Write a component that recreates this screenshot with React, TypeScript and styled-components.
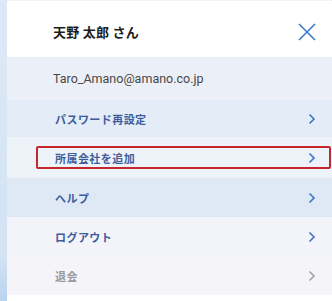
import styled, { createGlobalStyle } from "styled-components";

const GlobalStyle = createGlobalStyle`
  html, body {
    margin: 0;
    padding: 0;
    background: #ffffff;
  }
  body {
    font-family: "Noto Sans CJK JP", "Noto Sans", sans-serif;
  }
`;

const Page = styled.div`
  width: 332px;
  height: 301px;
  display: flex;
  overflow: hidden;
  background: #ffffff;
`;

const SideStrip = styled.div`
  width: 7px;
  flex-shrink: 0;
  background: linear-gradient(180deg, #dde9f6 0%, #d3e3f4 85%, #b9d3ee 100%);
`;

const Panel = styled.div`
  flex: 1;
  display: flex;
  flex-direction: column;
  padding-top: 5px;
  border-top: 1px dotted #e4e6f0;
`;

const Header = styled.div`
  height: 51px;
  display: flex;
  align-items: center;
  justify-content: space-between;
  padding: 0 14px 0 46px;
  background: #ffffff;
`;

const UserName = styled.span`
  font-size: 13px;
  font-weight: 700;
  color: #1c1c1c;
  letter-spacing: 0.02em;
`;

const CloseButton = styled.button`
  width: 22px;
  height: 22px;
  padding: 0;
  border: none;
  background: transparent;
  display: flex;
  align-items: center;
  justify-content: center;
`;

const Menu = styled.div`
  display: flex;
  flex-direction: column;
`;

interface RowProps {
  $bg: string;
  $height: number;
}

const Row = styled.div<RowProps>`
  height: ${({ $height }) => $height}px;
  display: flex;
  align-items: center;
  padding: 0 0 0 29px;
  background: ${({ $bg }) => $bg};
`;

interface ItemProps {
  $highlight?: boolean;
}

const Item = styled.div<ItemProps>`
  flex: 1;
  height: 23px;
  margin-right: 1px;
  display: flex;
  align-items: center;
  justify-content: space-between;
  padding: 0 13px 0 17px;
  box-sizing: border-box;
  border: 2px solid ${({ $highlight }) => ($highlight ? "#c4282e" : "transparent")};
  border-radius: 2px;
`;

const Email = styled.span`
  margin-left: 17px;
  font-family: "Roboto", "Noto Sans", sans-serif;
  font-size: 12.5px;
  color: #474747;
`;

interface LabelProps {
  $muted?: boolean;
}

const Label = styled.span<LabelProps>`
  font-size: 11px;
  font-weight: 700;
  letter-spacing: 0.04em;
  color: ${({ $muted }) => ($muted ? "#9a9a9a" : "#3d5c9c")};
`;

const Chevron = ({ color }: { color: string }) => (
  <svg width="8" height="12" viewBox="0 0 8 12">
    <path d="M1.5 1.5 L6 6 L1.5 10.5" fill="none" stroke={color} strokeWidth="1.6" />
  </svg>
);

const items = [
  { label: "パスワード再設定", bg: "#e3ecf7", height: 37 },
  { label: "所属会社を追加", bg: "#eef3fa", height: 41, highlight: true },
  { label: "ヘルプ", bg: "#dfe9f6", height: 39 },
  { label: "ログアウト", bg: "#f2f4fa", height: 39 },
  { label: "退会", bg: "#f4f4f9", height: 39, muted: true },
];

export default function App() {
  return (
    <Page>
      <GlobalStyle />
      <SideStrip />
      <Panel>
        <Header>
          <UserName>天野 太郎 さん</UserName>
          <CloseButton>
            <svg width="18" height="18" viewBox="0 0 18 18">
              <path d="M1 1 L17 17 M17 1 L1 17" stroke="#3a78d0" strokeWidth="1.6" />
            </svg>
          </CloseButton>
        </Header>
        <Menu>
          <Row $bg="#ebf0f8" $height={43}>
            <Email>Taro_Amano@amano.co.jp</Email>
          </Row>
          {items.map((item) => (
            <Row key={item.label} $bg={item.bg} $height={item.height}>
              <Item $highlight={item.highlight}>
                <Label $muted={item.muted}>{item.label}</Label>
                <Chevron color={item.muted ? "#a0a0a8" : "#3b74c4"} />
              </Item>
            </Row>
          ))}
        </Menu>
      </Panel>
    </Page>
  );
}
